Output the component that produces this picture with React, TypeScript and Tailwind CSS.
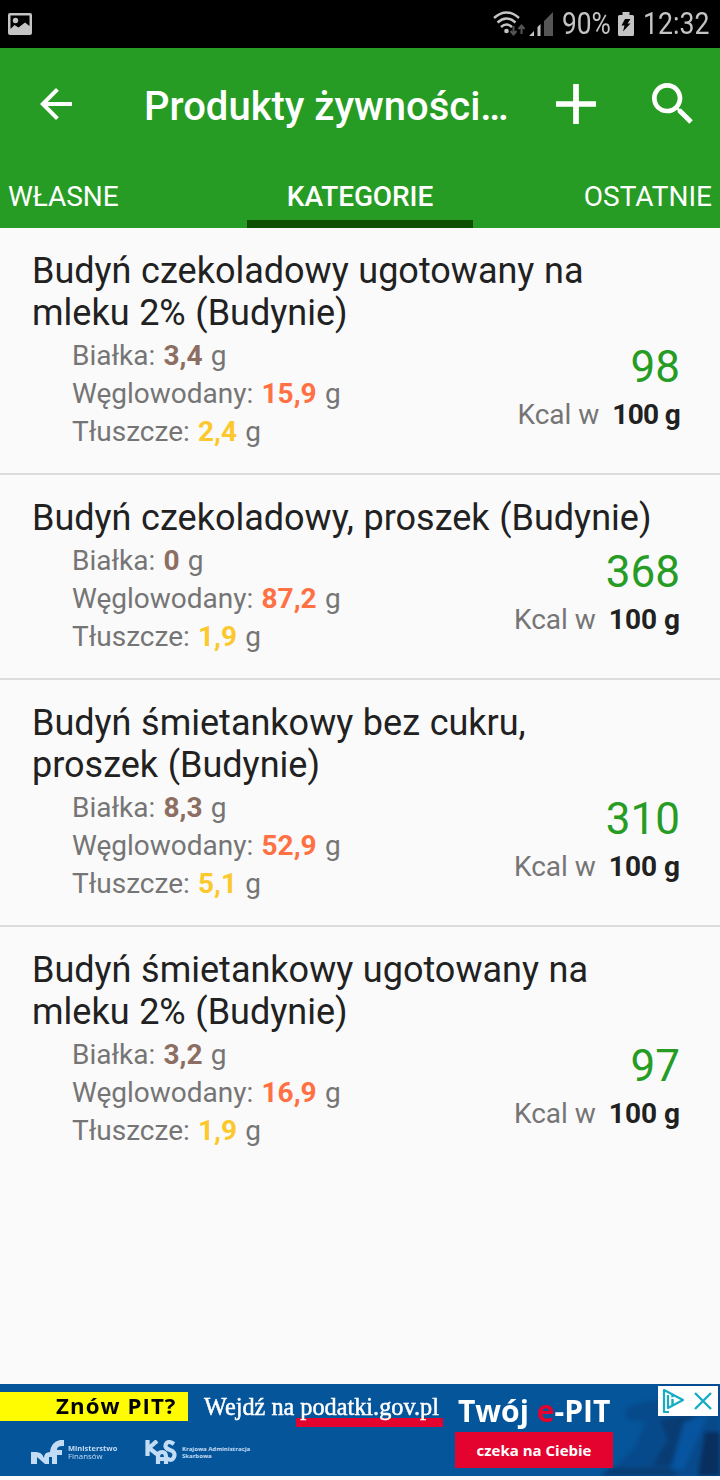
const products = [
  { name: "Budyń czekoladowy ugotowany na mleku 2% (Budynie)", protein: "3,4", carbs: "15,9", fat: "2,4", kcal: 98 },
  { name: "Budyń czekoladowy, proszek (Budynie)", protein: "0", carbs: "87,2", fat: "1,9", kcal: 368 },
  { name: "Budyń śmietankowy bez cukru, proszek (Budynie)", protein: "8,3", carbs: "52,9", fat: "5,1", kcal: 310 },
  { name: "Budyń śmietankowy ugotowany na mleku 2% (Budynie)", protein: "3,2", carbs: "16,9", fat: "1,9", kcal: 97 },
];

function StatusBar() {
  return (
    <div className="flex h-12 items-center justify-between bg-black pl-2 pr-[10px] text-[#c4c4c4]">
      <svg width="24" height="22" viewBox="0 0 24 22" fill="currentColor">
        <path fillRule="evenodd" d="M2 0h20a2 2 0 0 1 2 2v18a2 2 0 0 1-2 2H2a2 2 0 0 1-2-2V2a2 2 0 0 1 2-2zm.5 2.5V16l4-4 4 2.500 6.500-5 4.500 3.500V2.500z" />
        <circle cx="7.500" cy="7.500" r="2.700" />
      </svg>
      <div className="flex items-center">
        <svg width="61" height="26" viewBox="0 0 61 26" fill="none" className="mr-[8px]">
          <g stroke="#c4c4c4" strokeWidth="2.400">
            <path d="M1 7Q13.500-4 26 7" />
            <path d="M4.500 11.500Q13.500 3.500 22.500 11.500" />
            <path d="M8 16Q13.500 11 19 16" />
          </g>
          <circle cx="13.500" cy="20" r="2.300" fill="#c4c4c4" />
          <path d="M20.500 15v8M17.500 20l3 3.500 3-3.500M28.500 23v-8M25.500 18l3-3.500 3 3.500" stroke="#555" strokeWidth="2" />
          <path d="M36 25l5-5V25zM44.500 25v-9l3-3v12z" fill="#c4c4c4" />
          <path d="M51 25V10L60 1v24z" fill="#555" />
        </svg>
        <span className="w-[49px] origin-left scale-x-[0.850] whitespace-nowrap text-[31px] leading-[36px]">90%</span>
        <svg width="16" height="24" viewBox="0 0 16 24" className="ml-[7px] mr-[9px]">
          <path d="M4.500 0h7v3h3q1.500 0 1.500 1.500v18q0 1.500-1.500 1.500h-13Q0 24 0 22.500v-18Q0 3 1.500 3h3z" fill="#c4c4c4" />
          <path d="M7 7h5.500L9.500 11.500h3L5 19.500l1.500-6H3.500z" fill="#000" />
        </svg>
        <span className="w-[67px] origin-left scale-x-[0.860] whitespace-nowrap text-[31px] leading-[36px]">12:32</span>
      </div>
    </div>
  );
}

function Header() {
  return (
    <header className="h-[180px] bg-[#279c25] text-white">
      <div className="flex h-28 items-center">
        <svg width="48" height="48" viewBox="0 0 24 24" fill="currentColor" className="ml-8">
          <path d="M20 11H7.830l5.590-5.590L12 4l-8 8 8 8 1.410-1.410L7.830 13H20z" />
        </svg>
        <h1 className="ml-16 w-[384px] whitespace-nowrap pt-[5px] text-[40px] font-medium leading-[49px]">Produkty żywności…</h1>
        <svg width="40" height="40" viewBox="0 0 40 40" stroke="currentColor" strokeWidth="5.700" className="ml-[28px]">
          <path d="M20 0v40M0 20h40" />
        </svg>
        <svg width="56" height="56" viewBox="0 0 24 24" fill="currentColor" className="ml-[49px]">
          <path d="M15.500 14h-.790l-.280-.270C15.410 12.590 16 11.110 16 9.500 16 5.910 13.090 3 9.500 3S3 5.910 3 9.500 5.910 16 9.500 16c1.610 0 3.090-.590 4.230-1.570l.270.280v.790l5 4.990L20.490 19l-4.990-5zm-6 0C7.010 14 5 11.990 5 9.500S7.010 5 9.500 5 14 7.010 14 9.500 11.990 14 9.500 14z" />
        </svg>
      </div>
      <nav className="grid h-[68px] grid-cols-[247px_226px_247px] text-[28px] leading-[32px]">
        <div className="pl-2 pt-[21px]">WŁASNE</div>
        <div className="border-b-8 border-[#0c5000] pt-[21px] text-center font-medium tracking-[-0.100px]">KATEGORIE</div>
        <div className="pr-2 pt-[21px] text-right">OSTATNIE</div>
      </nav>
    </header>
  );
}

function ProductRow({ product }: { product: (typeof products)[number] }) {
  return (
    <li className="border-b-2 border-[#dcdcdc] pb-[22px] pl-8 pr-10 pt-[22px] last:border-transparent">
      <h2 className="w-[622px] text-[36px] leading-[42px] text-[#212121] [word-spacing:0.700px]">{product.name}</h2>
      <div className="flex justify-between pl-10 pt-[3px] text-[28px] leading-[38px] text-[#757575]">
        <div className="[word-spacing:1.300px]">
          <p>Białka: <b className="text-[#8d6e63]">{product.protein}</b> g</p>
          <p>Węglowodany: <b className="text-[#ff7043]">{product.carbs}</b> g</p>
          <p>Tłuszcze: <b className="text-[#fbc82d]">{product.fat}</b> g</p>
        </div>
        <div className="pt-[4px] text-right">
          <p className="text-[44px] leading-[52px] text-[#279c25]">{product.kcal}</p>
          <p className="mt-[3px]">
            Kcal w <b className={product.kcal === 98 ? "ml-[6px] tracking-[-0.700px] text-[#212121]" : "ml-[6px] text-[#212121]"}>100 g</b>
          </p>
        </div>
      </div>
    </li>
  );
}

function AdBanner() {
  return (
    <div className="relative flex h-[92px] overflow-hidden bg-[#05559b] text-white">
      <svg width="120" height="92" viewBox="0 0 120 92" className="absolute right-0 top-0">
        <g className="blur-[2px]">
          <path d="M28 36q-8-10 4-15l28-6V0h60v92H18l-8-4 24-24 12-26z" fill="#074a8b" />
          <path d="M60 36l34-6-20 52H52l16-26z" fill="#083c73" />
          <path d="M84 38l24-8-24 56H70z" fill="#0754a0" />
          <path d="M105 48h15v44H98z" fill="#082f5e" />
          <path d="M10 84h60l10 8H0z" fill="#083c73" />
        </g>
      </svg>

      <div className="w-[188px]">
        <div className="mt-2 flex h-[29px] items-center bg-[#fffb00] pl-[56px] font-['Open_Sans'] text-[21px] font-bold text-black">
          <span className="origin-left scale-x-[1.060] whitespace-nowrap tracking-[1px]">Znów PIT?</span>
        </div>
        <div className="mt-[19px] flex w-[270px] items-center pl-[31px] text-[#c3dcf5]">
          <svg width="33" height="25" viewBox="0 0 33 25" fill="currentColor">
            <path d="M0 24V12h5q6 0 8 6 0-6 6-6 1-10 10-12h4v6h-2q-5 0-5 4h5v5h-5v9h-5v-7h-3v7h-4l-8-7v7z" />
          </svg>
          <div className="ml-1 w-[54px] whitespace-nowrap font-['Open_Sans'] text-[7px] font-bold leading-[8px]">
            <p className="origin-left scale-x-[1.070]">Ministerstwo</p>
            <p className="origin-left scale-x-[1.120] font-normal">Finansów</p>
          </div>
          <svg width="32" height="25" viewBox="0 0 32 25" fill="none" stroke="currentColor" strokeWidth="4.200" className="ml-[23px]">
            <path d="M2.500 0v16M12 1L4 8l9 7M13 24v-7q0-5 4-5t4 5v7M13 19h8" />
            <path d="M29 4q-6-4-8 0t4 6 4 7-8 1" />
          </svg>
          <div className="ml-[5px] whitespace-nowrap font-['Open_Sans'] text-[6px] font-bold leading-[7px]">
            <p>Krajowa Administracja</p>
            <p>Skarbowa</p>
          </div>
        </div>
      </div>

      <div className="relative ml-4 h-[46px] w-[234px] pt-[9px] font-['Liberation_Serif'] text-[25px] leading-[28px]">
        <div className="absolute left-[92px] top-[34px] h-[9px] w-[147px] bg-[#e4022f]" />
        <p className="relative origin-left scale-x-[0.970] whitespace-nowrap [-webkit-text-stroke:0.500px_white]">Wejdź na podatki.gov.pl</p>
      </div>

      <div className="relative ml-[17px] w-[158px]">
        <p className="h-[48px] origin-left scale-x-[0.970] whitespace-nowrap pl-[3px] pt-[8px] font-['Open_Sans'] text-[31px] font-bold leading-[36px]">
          Twój <span className="text-[#e4022f]">e</span>-PIT
        </p>
        <div className="flex h-[36px] items-center justify-center bg-[#e4022f] font-['Open_Sans'] text-[15px] font-bold">czeka na Ciebie</div>
      </div>

      <div className="absolute right-[2px] top-[2px] flex h-[30px] w-[60px] items-center justify-between bg-white pl-1 pr-[6px]">
        <svg width="23" height="26" viewBox="0 0 23 26" fill="none" stroke="#16adc4" strokeWidth="2.200" strokeLinejoin="round">
          <path d="M7 24H2V2l19 10L6 20V7" />
          <path d="M10.500 11v6M10.500 7v2.300" strokeWidth="2.400" />
        </svg>
        <svg width="18" height="18" viewBox="0 0 18 18" stroke="#16adc4" strokeWidth="2.400">
          <path d="M1 1l16 16M17 1L1 17" />
        </svg>
      </div>
    </div>
  );
}

export default function App() {
  return (
    <div className="flex h-[1480px] w-[720px] flex-col overflow-hidden bg-[#fafafa] pb-1 font-[Roboto,sans-serif]">
      <StatusBar />
      <Header />
      <ul className="flex-1">
        {products.map((product) => (
          <ProductRow key={product.name} product={product} />
        ))}
      </ul>
      <AdBanner />
    </div>
  );
}
